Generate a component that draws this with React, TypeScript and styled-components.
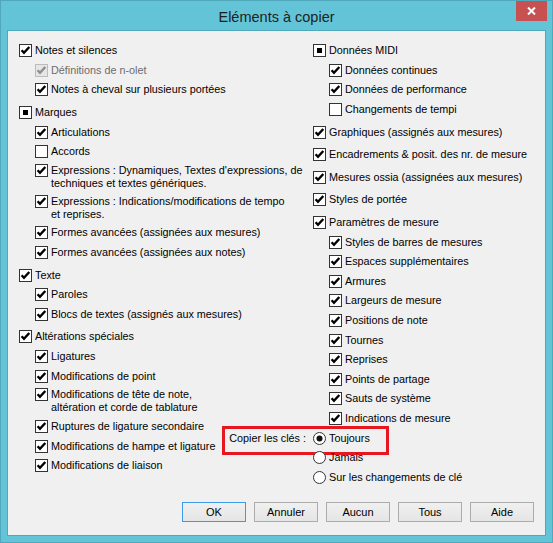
import React from "react";
import styled, { createGlobalStyle } from "styled-components";

type CheckState = "checked" | "unchecked" | "mixed";
type Item = {
  label: string[];
  state: CheckState;
  disabled?: boolean;
  children?: Item[];
};

const on = (label: string | string[], extra: Partial<Item> = {}): Item => ({
  label: Array.isArray(label) ? label : [label],
  state: "checked",
  ...extra,
});

const leftItems: Item[] = [
  on("Notes et silences", {
    children: [
      on("Définitions de n-olet", { disabled: true }),
      on("Notes à cheval sur plusieurs portées"),
    ],
  }),
  on("Marques", {
    state: "mixed",
    children: [
      on("Articulations"),
      on("Accords", { state: "unchecked" }),
      on(["Expressions : Dynamiques, Textes d'expressions, de", "techniques et textes génériques."]),
      on(["Expressions : Indications/modifications de tempo", "et reprises."]),
      on("Formes avancées (assignées aux mesures)"),
      on("Formes avancées (assignées aux notes)"),
    ],
  }),
  on("Texte", {
    children: [on("Paroles"), on("Blocs de textes (assignés aux mesures)")],
  }),
  on("Altérations spéciales", {
    children: [
      on("Ligatures"),
      on("Modifications de point"),
      on(["Modifications de tête de note,", "altération et corde de tablature"]),
      on("Ruptures de ligature secondaire"),
      on("Modifications de hampe et ligature"),
      on("Modifications de liaison"),
    ],
  }),
];

const rightItems: Item[] = [
  on("Données MIDI", {
    state: "mixed",
    children: [
      on("Données continues"),
      on("Données de performance"),
      on("Changements de tempi", { state: "unchecked" }),
    ],
  }),
  on("Graphiques (assignés aux mesures)"),
  on("Encadrements & posit. des nr. de mesure"),
  on("Mesures ossia (assignées aux mesures)"),
  on("Styles de portée"),
  on("Paramètres de mesure", {
    children: [
      on("Styles de barres de mesures"),
      on("Espaces supplémentaires"),
      on("Armures"),
      on("Largeurs de mesure"),
      on("Positions de note"),
      on("Tournes"),
      on("Reprises"),
      on("Points de partage"),
      on("Sauts de système"),
      on("Indications de mesure"),
    ],
  }),
];

const radios = ["Toujours", "Jamais", "Sur les changements de clé"];
const buttons = ["OK", "Annuler", "Aucun", "Tous", "Aide"];

const CheckBox = ({ state, disabled }: { state: CheckState; disabled?: boolean }) => (
  <svg width="13" height="13" viewBox="0 0 13 13">
    <rect
      x="0.5"
      y="0.5"
      width="12"
      height="12"
      fill={disabled ? "#E6E6E6" : "#FFFFFF"}
      stroke={disabled ? "#BCBCBC" : "#333333"}
    />
    {state === "checked" && (
      <path
        d="M2.6 6.2 L5 8.8 L10.3 3"
        fill="none"
        stroke={disabled ? "#8E8E8E" : "#000000"}
        strokeWidth="2.4"
      />
    )}
    {state === "mixed" && <rect x="4" y="4" width="5" height="5" fill="#000000" />}
  </svg>
);

const Radio = ({ selected }: { selected?: boolean }) => (
  <svg width="13" height="13" viewBox="0 0 13 13">
    <circle cx="6.5" cy="6.5" r="6" fill="#FFFFFF" stroke="#333333" />
    {selected && <circle cx="6.5" cy="6.5" r="3" fill="#111111" />}
  </svg>
);

const CheckRow = ({ item }: { item: Item }) => (
  <Row $lines={item.label.length}>
    <BoxSlot>
      <CheckBox state={item.state} disabled={item.disabled} />
    </BoxSlot>
    <Label $disabled={item.disabled}>
      {item.label.map((line) => (
        <div key={line}>{line}</div>
      ))}
    </Label>
  </Row>
);

const ItemGroup = ({ item }: { item: Item }) => (
  <Group>
    <CheckRow item={item} />
    {item.children && (
      <SubList>
        {item.children.map((child) => (
          <CheckRow key={child.label[0]} item={child} />
        ))}
      </SubList>
    )}
  </Group>
);

const App = () => {
  return (
    <>
      <GlobalStyle />
      <Window>
        <TitleBar>
          <Title>Eléments à copier</Title>
          <CloseButton>
            <svg width="9" height="8" viewBox="0 0 9 8">
              <path d="M1 0.5 L8 7.5 M8 0.5 L1 7.5" stroke="#FFFFFF" strokeWidth="2" />
            </svg>
          </CloseButton>
        </TitleBar>
        <Body>
          <Columns>
            <Column>
              {leftItems.map((item) => (
                <ItemGroup key={item.label[0]} item={item} />
              ))}
            </Column>
            <Column>
              {rightItems.map((item) => (
                <ItemGroup key={item.label[0]} item={item} />
              ))}
              <RadioList>
                {radios.map((label, i) => (
                  <Row key={label} $lines={1}>
                    {i === 0 && (
                      <>
                        <Highlight />
                        <RadioCaption>Copier les clés :</RadioCaption>
                      </>
                    )}
                    <BoxSlot>
                      <Radio selected={i === 0} />
                    </BoxSlot>
                    <Label>{label}</Label>
                  </Row>
                ))}
              </RadioList>
            </Column>
          </Columns>
          <ButtonRow>
            {buttons.map((b) => (
              <Button key={b} $default={b === "OK"}>
                {b}
              </Button>
            ))}
          </ButtonRow>
        </Body>
      </Window>
    </>
  );
};

const GlobalStyle = createGlobalStyle`
  html, body {
    margin: 0;
    padding: 0;
    background: #FFFFFF;
  }
  body {
    font-family: "Liberation Sans", Arial, sans-serif;
  }
`;
const Window = styled.div`
  box-sizing: border-box;
  width: 553px;
  height: 543px;
  border: 1px solid #4FA8BC;
  background: #63C4D7;
  display: flex;
  flex-direction: column;
`;
const TitleBar = styled.div`
  height: 29px;
  display: grid;
  grid-template-columns: 1fr auto 1fr;
  align-items: start;
`;
const Title = styled.div`
  grid-column: 2;
  padding-top: 8px;
  font-size: 14.5px;
  line-height: 17px;
  color: #1E1E1E;
`;
const CloseButton = styled.div`
  grid-column: 3;
  justify-self: end;
  width: 31px;
  height: 20px;
  margin-right: 5px;
  background: #C75050;
  display: flex;
  align-items: center;
  justify-content: center;
`;
const Body = styled.div`
  position: relative;
  flex: 1;
  margin: 0 6px 6px;
  border: 1px solid #4FA8BC;
  background: #F0F0F0;
  padding: 10px 11px 13px;
  display: flex;
  flex-direction: column;
  font-size: 10.8px;
  color: #000000;
`;
const Columns = styled.div`
  display: grid;
  grid-template-columns: 294px 1fr;
`;
const Column = styled.div`
  display: flex;
  flex-direction: column;
`;
const Group = styled.div`
  display: flex;
  flex-direction: column;
  & + & {
    margin-top: 3px;
  }
`;
const SubList = styled.div`
  display: flex;
  flex-direction: column;
  padding-left: 16px;
`;
const Row = styled.div<{ $lines: number }>`
  position: relative;
  display: flex;
  align-items: ${(p) => (p.$lines > 1 ? "flex-start" : "center")};
  height: ${(p) => (p.$lines > 1 ? "30.8px" : "19.6px")};
  padding-top: ${(p) => (p.$lines > 1 ? "2.4px" : "0")};
  box-sizing: border-box;
  white-space: nowrap;
`;
const BoxSlot = styled.span`
  display: flex;
  width: 13px;
  height: 13px;
  margin-right: 3px;
  flex: none;
`;
const Label = styled.div<{ $disabled?: boolean }>`
  line-height: 13px;
  color: ${(p) => (p.$disabled ? "#6D6D6D" : "#000000")};
`;
const RadioList = styled.div`
  display: flex;
  flex-direction: column;
`;
const RadioCaption = styled.span`
  position: absolute;
  right: 100%;
  margin-right: 7px;
  line-height: 13px;
`;
const Highlight = styled.div`
  position: absolute;
  left: -91px;
  top: -2px;
  width: 167px;
  height: 29px;
  box-sizing: border-box;
  border: 3px solid #E8161F;
`;
const ButtonRow = styled.div`
  margin-top: auto;
  display: flex;
  justify-content: flex-end;
  gap: 8px;
`;
const Button = styled.div<{ $default?: boolean }>`
  box-sizing: border-box;
  width: 64px;
  height: 20px;
  display: flex;
  align-items: center;
  justify-content: center;
  border: 1px solid ${(p) => (p.$default ? "#3C9AE6" : "#ACACAC")};
  background: linear-gradient(#F0F0F0, #E5E5E5);
  font-size: 11px;
  color: #000000;
`;

export default App;
